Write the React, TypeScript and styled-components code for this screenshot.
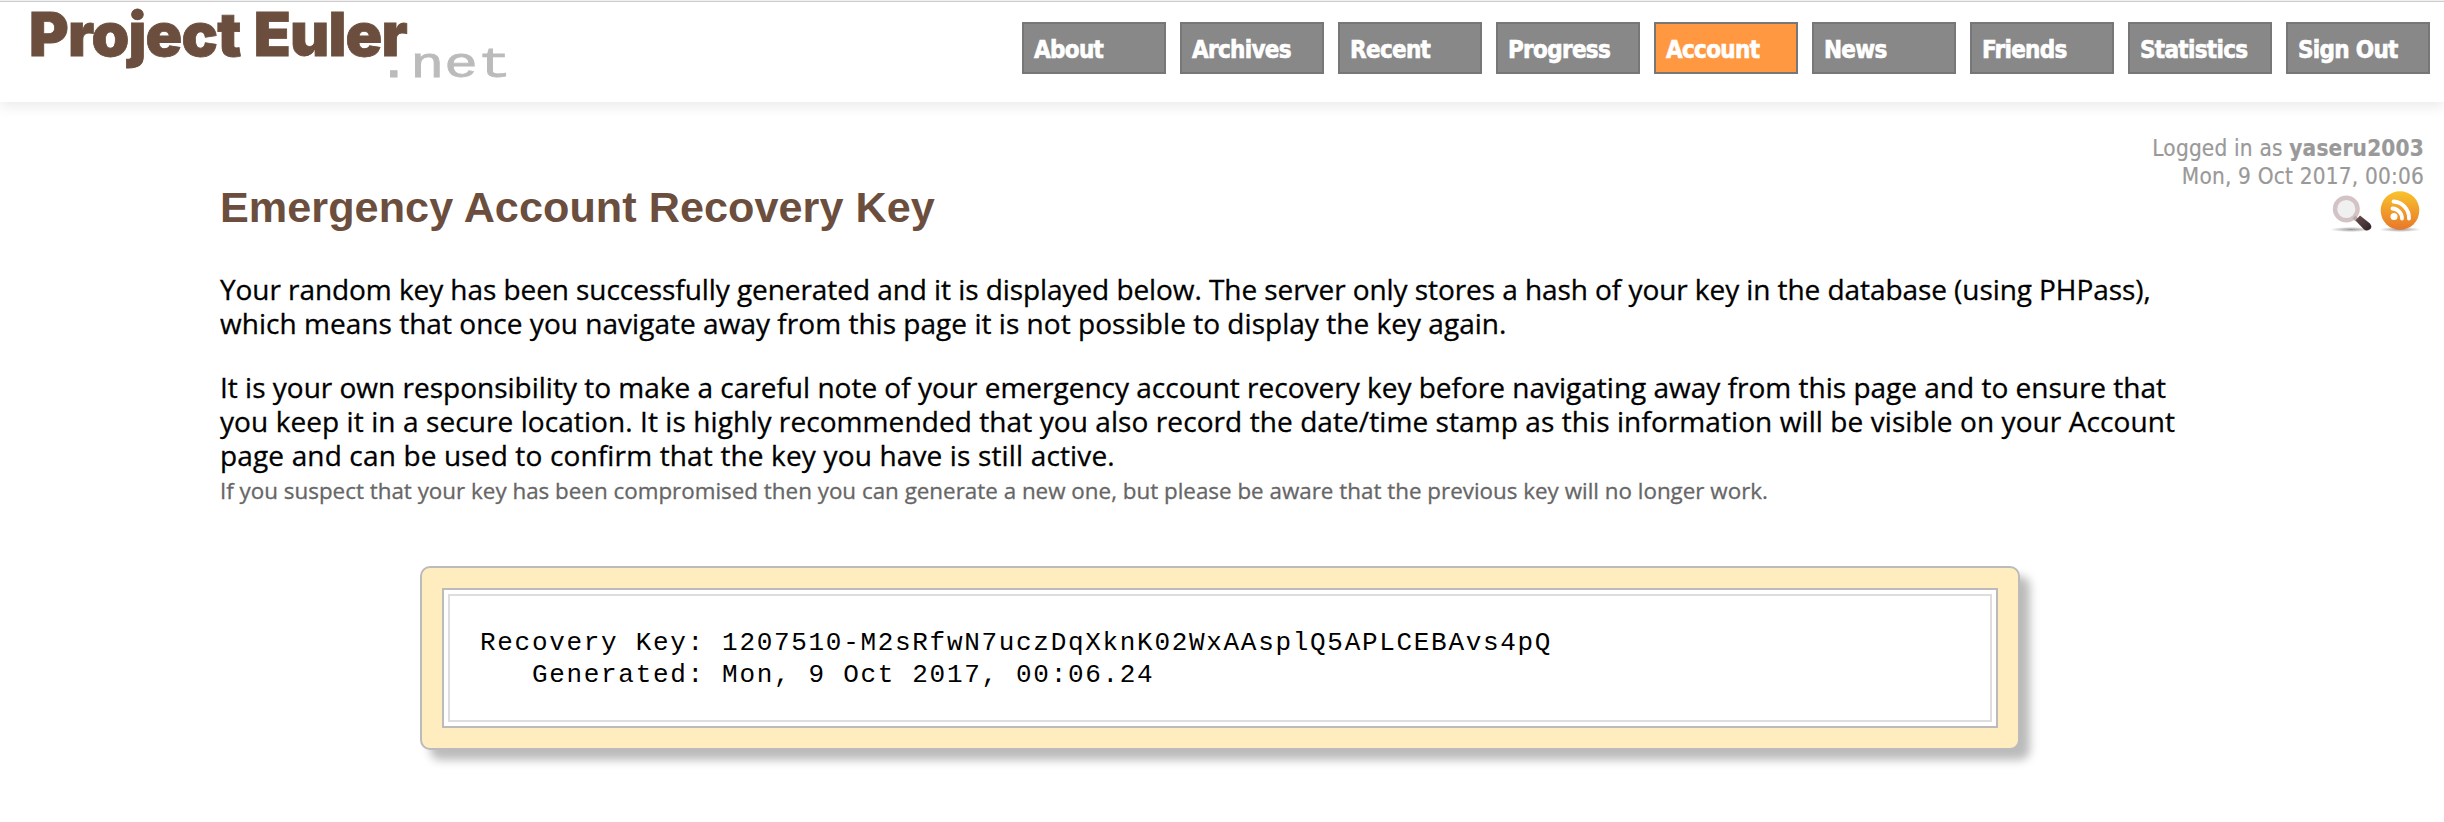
import React from "react";
import styled, { createGlobalStyle } from "styled-components";

const GlobalStyle = createGlobalStyle`
  body { margin: 0; min-height: 822px; background: #fff; color: #000; }
`;

const Header = styled.header`
  box-sizing: border-box;
  height: 102px;
  display: flex;
  justify-content: space-between;
  align-items: flex-start;
  border-top: 1px solid #f0f0f0;
  background: linear-gradient(#ccc 1px, #fff 1px);
  box-shadow: 0 5px 12px rgba(0, 0, 0, 0.08);
`;

const Logo = styled.div`
  display: flex;
  align-items: flex-start;
  padding: 1px 0 0 29px;
`;

const LogoName = styled.span`
  width: 348px;
  font: 900 60.5px/64px Inter, "Liberation Sans", sans-serif;
  letter-spacing: -0.8px;
  word-spacing: 2px;
  -webkit-text-stroke: 0.8px;
  white-space: nowrap;
  color: #6b4e3d;
`;

const LogoSuffix = styled.span`
  margin-top: 43px;
  font: 42px/42px "Liberation Mono", monospace;
  -webkit-text-stroke: 0.8px;
  color: #bbb;
  transform: scaleX(1.333);
  transform-origin: left;
`;

const Nav = styled.nav`
  display: flex;
  gap: 14px;
  padding: 21px 14px 0 0;
`;

const NavItem = styled.a<{ $active?: boolean }>`
  box-sizing: border-box;
  width: 144px;
  height: 52px;
  padding-left: 10px;
  border: 2px solid #777;
  background: ${(p) => (p.$active ? "#ff9840" : "#888")};
  color: #fff;
  font: bold 24px/52px "DejaVu Sans Condensed", "DejaVu Sans", sans-serif;
  letter-spacing: -0.7px;
  -webkit-text-stroke: 0.6px;
  white-space: nowrap;
`;

const UserPanel = styled.aside`
  float: right;
  margin: 32px 20px 0 0;
  display: flex;
  flex-direction: column;
  align-items: flex-end;
  font: 22.4px/28px "DejaVu Sans Condensed", "DejaVu Sans", sans-serif;
  letter-spacing: 0.2px;
  -webkit-text-stroke: 0.2px;
  color: #999;
`;

const Tools = styled.svg`
  display: block;
`;

const Main = styled.main`
  width: 2000px;
  padding: 80px 0 0 220px;
`;

const Title = styled.h2`
  margin: 0 0 40px;
  font: bold 43.2px/50px "Liberation Sans", sans-serif;
  letter-spacing: 0.04px;
  color: #6b4e3d;
`;

const Paragraph = styled.p`
  margin: 0 0 30px;
  font: 28px/34px "Open Sans", sans-serif;
  -webkit-text-stroke: 0.3px;
`;

const Line = styled.span<{ $track: number }>`
  display: block;
  white-space: nowrap;
  letter-spacing: ${(p) => p.$track}px;
`;

const Note = styled.p`
  margin: -30px 0 56px;
  font: 22.4px/38px "Open Sans", sans-serif;
  -webkit-text-stroke: 0.3px;
  color: #666;
`;

const KeyFrame = styled.section`
  box-sizing: border-box;
  width: 1600px;
  height: 184px;
  margin-left: 200px;
  padding: 20px;
  border: 2px solid #bbb;
  border-radius: 10px;
  background: #ffedc0;
  box-shadow: 10px 10px 10px #bbb;
`;

const KeyPaper = styled.div`
  box-sizing: border-box;
  height: 140px;
  padding: 4px;
  border: 2px solid #bbb;
  background: #fff;
`;

const KeyText = styled.pre`
  box-sizing: border-box;
  height: 128px;
  margin: 0;
  padding: 31px 0 0 30px;
  border: 2px solid #ddd;
  font: 26px/32px "Liberation Mono", monospace;
  letter-spacing: 1.69px;
`;

const items = ["About", "Archives", "Recent", "Progress", "Account", "News", "Friends", "Statistics", "Sign Out"];

export default function App() {
  return (
    <>
      <GlobalStyle />
      <Header>
        <Logo>
          <LogoName>Project Euler</LogoName>
          <LogoSuffix>.net</LogoSuffix>
        </Logo>
        <Nav>
          {items.map((label) => (
            <NavItem key={label} $active={label === "Account"}>{label}</NavItem>
          ))}
        </Nav>
      </Header>
      <UserPanel>
        <div>Logged in as <strong>yaseru2003</strong></div>
        <div>Mon, 9 Oct 2017, 00:06</div>
        <Tools width="96" height="44" viewBox="0 0 96 44">
          <defs>
            <linearGradient id="rss" x1="0" y1="0" x2="0" y2="1">
              <stop offset="0" stopColor="#f8c32c" />
              <stop offset="1" stopColor="#e8772a" />
            </linearGradient>
            <linearGradient id="handle" x1="0" y1="0" x2="1" y2="1">
              <stop offset="0" stopColor="#6b5050" />
              <stop offset="1" stopColor="#2e2024" />
            </linearGradient>
            <radialGradient id="shade">
              <stop offset="0" stopColor="#999" />
              <stop offset="1" stopColor="#999" stopOpacity="0" />
            </radialGradient>
          </defs>
          <ellipse cx="23" cy="39.5" rx="21" ry="2.6" fill="url(#shade)" />
          <circle cx="18.3" cy="19" r="11.3" fill="#f1f0f0" stroke="#d3c3c5" strokeWidth="4.4" />
          <path d="M26 27l3 3" stroke="#b9a9ab" strokeWidth="4" />
          <path d="M27.5 30.5l4.5-5 10 8q3 4-0.5 6-3 2-5.5 0z" fill="url(#handle)" />
          <ellipse cx="72" cy="39.5" rx="21" ry="2.6" fill="url(#shade)" />
          <circle cx="72" cy="20.5" r="19.3" fill="url(#rss)" />
          <circle cx="66" cy="26.6" r="3.5" fill="#fff" />
          <g fill="none" stroke="#fff" strokeWidth="3.8" strokeLinecap="round">
            <path d="M64.5 18.5a10 10 0 0 1 9.5 10" />
            <path d="M65.5 11.500a16.500 16.500 0 0 1 15.500 17" />
          </g>
        </Tools>
      </UserPanel>
      <Main>
        <Title>Emergency Account Recovery Key</Title>
        <Paragraph>
          <Line $track={-0.07}>Your random key has been successfully generated and it is displayed below. The server only stores a hash of your key in the database (using PHPass),</Line>
          <Line $track={0.03}>which means that once you navigate away from this page it is not possible to display the key again.</Line>
        </Paragraph>
        <Paragraph>
          <Line $track={0}>It is your own responsibility to make a careful note of your emergency account recovery key before navigating away from this page and to ensure that</Line>
          <Line $track={0.083}>you keep it in a secure location. It is highly recommended that you also record the date/time stamp as this information will be visible on your Account</Line>
          <Line $track={0.15}>page and can be used to confirm that the key you have is still active.</Line>
        </Paragraph>
        <Note>If you suspect that your key has been compromised then you can generate a new one, but please be aware that the previous key will no longer work.</Note>
        <KeyFrame>
          <KeyPaper>
            <KeyText>{"Recovery Key: 1207510-M2sRfwN7uczDqXknK02WxAAsplQ5APLCEBAvs4pQ\n   Generated: Mon, 9 Oct 2017, 00:06.24"}</KeyText>
          </KeyPaper>
        </KeyFrame>
      </Main>
    </>
  );
}
